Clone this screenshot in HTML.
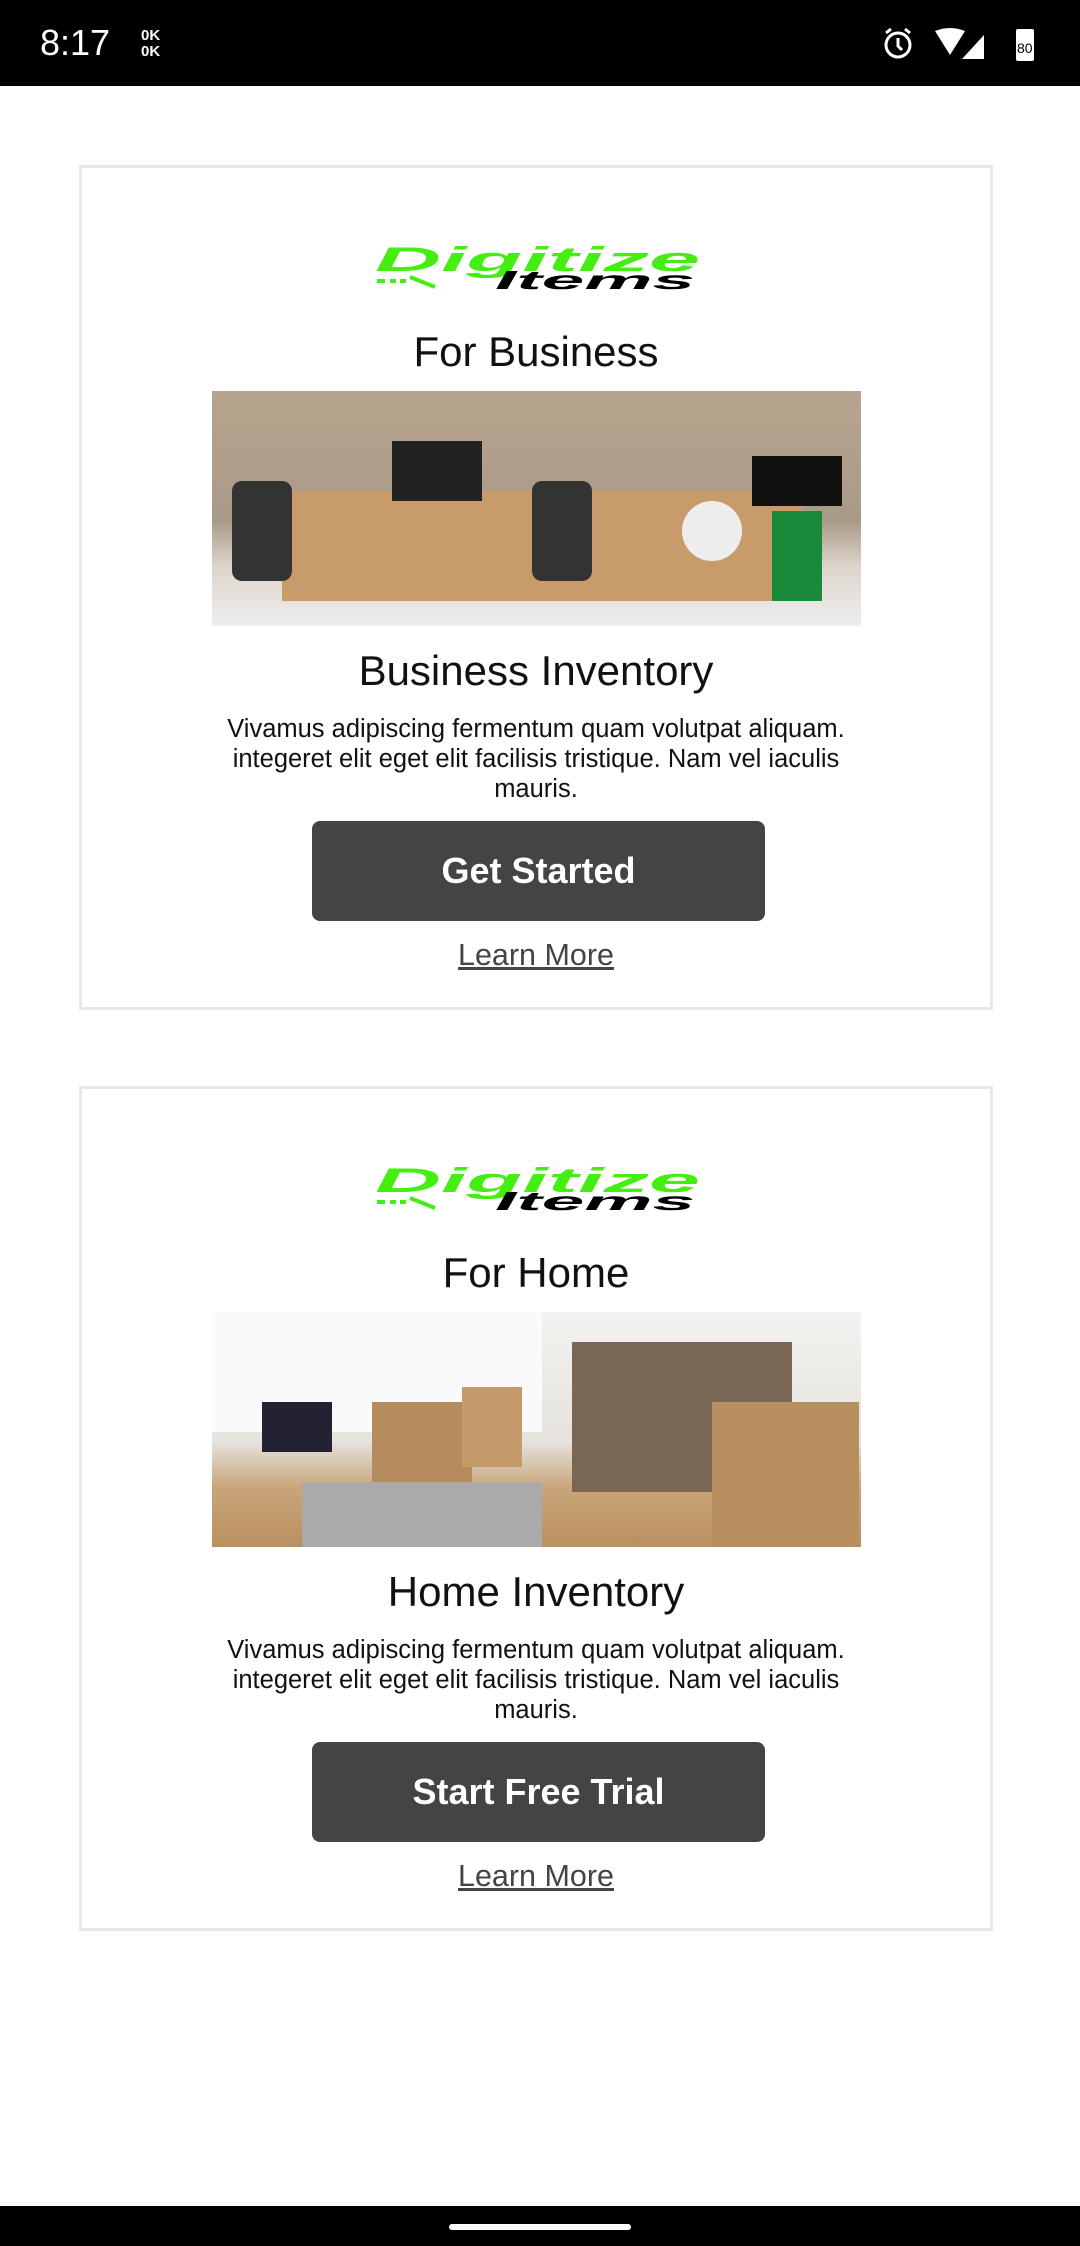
<!DOCTYPE html>
<html><head><meta charset="utf-8"><style>
*{margin:0;padding:0;box-sizing:border-box}
body{width:1080px;height:2246px;background:#fff;font-family:"Liberation Sans",sans-serif;position:relative;overflow:hidden}
.sb{position:absolute;left:0;top:0;width:1080px;height:86px;background:#000;color:#fff}
.card{position:absolute;left:79px;width:914px;border:3px solid #e8e8e8;background:#fff}
.logo{position:absolute;left:283px;top:73px;width:347px;height:52px}
.h{position:absolute;left:0;width:100%;text-align:center;color:#111;font-size:42px}
.img{position:absolute;left:130px;width:649px;height:235px;overflow:hidden}
.p{position:absolute;left:0;width:100%;text-align:center;font-size:25.5px;line-height:30px;color:#111}
.btn{position:absolute;left:230px;width:453px;height:100px;background:#444;border-radius:8px;color:#fff;font-weight:bold;font-size:36px;text-align:center;line-height:100px}
.lm{position:absolute;left:0;width:100%;text-align:center;font-size:30.5px;color:#444;text-decoration:underline}
.nav{position:absolute;left:0;top:2206px;width:1080px;height:40px;background:#000}
</style></head><body>
<div class="sb">
<div style="position:absolute;left:40px;top:22px;font-size:36px">8:17</div>
<div style="position:absolute;left:141px;top:28px;font-size:15px;line-height:16px;font-weight:bold">0K<br>0K</div>
<svg style="position:absolute;left:880px;top:25px" width="160" height="38" viewBox="0 0 160 38">
<circle cx="18" cy="20" r="12" fill="none" stroke="#fff" stroke-width="3"/><path d="M18 13v8l4 4M6 8l5-4M30 8l-5-4" stroke="#fff" stroke-width="3" fill="none"/>
<path d="M55 6q15-6 30 0l-15 24z" fill="#fff"/><path d="M82 34l22-24v24z" fill="#fff"/>
<rect x="136" y="4" width="18" height="32" rx="2" fill="#fff"/><text x="137" y="28" font-size="14" fill="#000">80</text>
</svg>
</div>

<div class="card" style="top:165px;height:845px">
<svg class="logo" viewBox="0 0 347 52"><text x="10" y="30" font-size="34" font-weight="bold" font-style="italic" fill="#44ee11" textLength="325" lengthAdjust="spacingAndGlyphs">Digitize</text><text x="130" y="48" font-size="26" font-weight="bold" font-style="italic" fill="#000" textLength="200" lengthAdjust="spacingAndGlyphs">Items</text><path d="M12 40h8M25 40h6M35 40h6M45 36l25 10" stroke="#44ee11" stroke-width="4"/></svg>
<div class="h" style="top:160px">For Business</div>
<div class="img" style="top:223px;background:linear-gradient(#b7a48e,#a99a88 55%,#ddd5cc 75%,#eee 100%)">
<div style="position:absolute;left:70px;top:100px;width:520px;height:110px;background:#c79c6a"></div>
<div style="position:absolute;left:180px;top:50px;width:90px;height:60px;background:#222"></div>
<div style="position:absolute;left:540px;top:65px;width:90px;height:50px;background:#111"></div>
<div style="position:absolute;left:560px;top:120px;width:50px;height:90px;background:#1a8a3a"></div>
<div style="position:absolute;left:20px;top:90px;width:60px;height:100px;background:#333;border-radius:10px"></div>
<div style="position:absolute;left:320px;top:90px;width:60px;height:100px;background:#333;border-radius:10px"></div>
<div style="position:absolute;left:470px;top:110px;width:60px;height:60px;background:#eee;border-radius:50%"></div>
</div>
<div class="h" style="top:479px">Business Inventory</div>
<div class="p" style="top:546px">Vivamus adipiscing fermentum quam volutpat aliquam.<br>integeret elit eget elit facilisis tristique. Nam vel iaculis<br>mauris.</div>
<div class="btn" style="top:653px">Get Started</div>
<div class="lm" style="top:770px">Learn More</div>
</div>

<div class="card" style="top:1086px;height:845px">
<svg class="logo" viewBox="0 0 347 52"><text x="10" y="30" font-size="34" font-weight="bold" font-style="italic" fill="#44ee11" textLength="325" lengthAdjust="spacingAndGlyphs">Digitize</text><text x="130" y="48" font-size="26" font-weight="bold" font-style="italic" fill="#000" textLength="200" lengthAdjust="spacingAndGlyphs">Items</text><path d="M12 40h8M25 40h6M35 40h6M45 36l25 10" stroke="#44ee11" stroke-width="4"/></svg>
<div class="h" style="top:160px">For Home</div>
<div class="img" style="top:223px;background:linear-gradient(#f2f2f0,#e6e3de 55%,#c9a57a 75%,#b98f60 100%)">
<div style="position:absolute;left:0;top:0;width:330px;height:120px;background:#fafafa"></div>
<div style="position:absolute;left:160px;top:90px;width:100px;height:85px;background:#b68c5e"></div>
<div style="position:absolute;left:250px;top:75px;width:60px;height:80px;background:#c49a6a"></div>
<div style="position:absolute;left:360px;top:30px;width:220px;height:150px;background:#7a6655"></div>
<div style="position:absolute;left:500px;top:90px;width:147px;height:145px;background:#b8905f"></div>
<div style="position:absolute;left:50px;top:90px;width:70px;height:50px;background:#223"></div>
<div style="position:absolute;left:90px;top:170px;width:240px;height:65px;background:#aaa"></div>
</div>
<div class="h" style="top:479px">Home Inventory</div>
<div class="p" style="top:546px">Vivamus adipiscing fermentum quam volutpat aliquam.<br>integeret elit eget elit facilisis tristique. Nam vel iaculis<br>mauris.</div>
<div class="btn" style="top:653px">Start Free Trial</div>
<div class="lm" style="top:770px">Learn More</div>
</div>

<div class="nav"><div style="position:absolute;left:449px;top:18px;width:182px;height:6px;border-radius:3px;background:#fff"></div></div>
</body></html>
